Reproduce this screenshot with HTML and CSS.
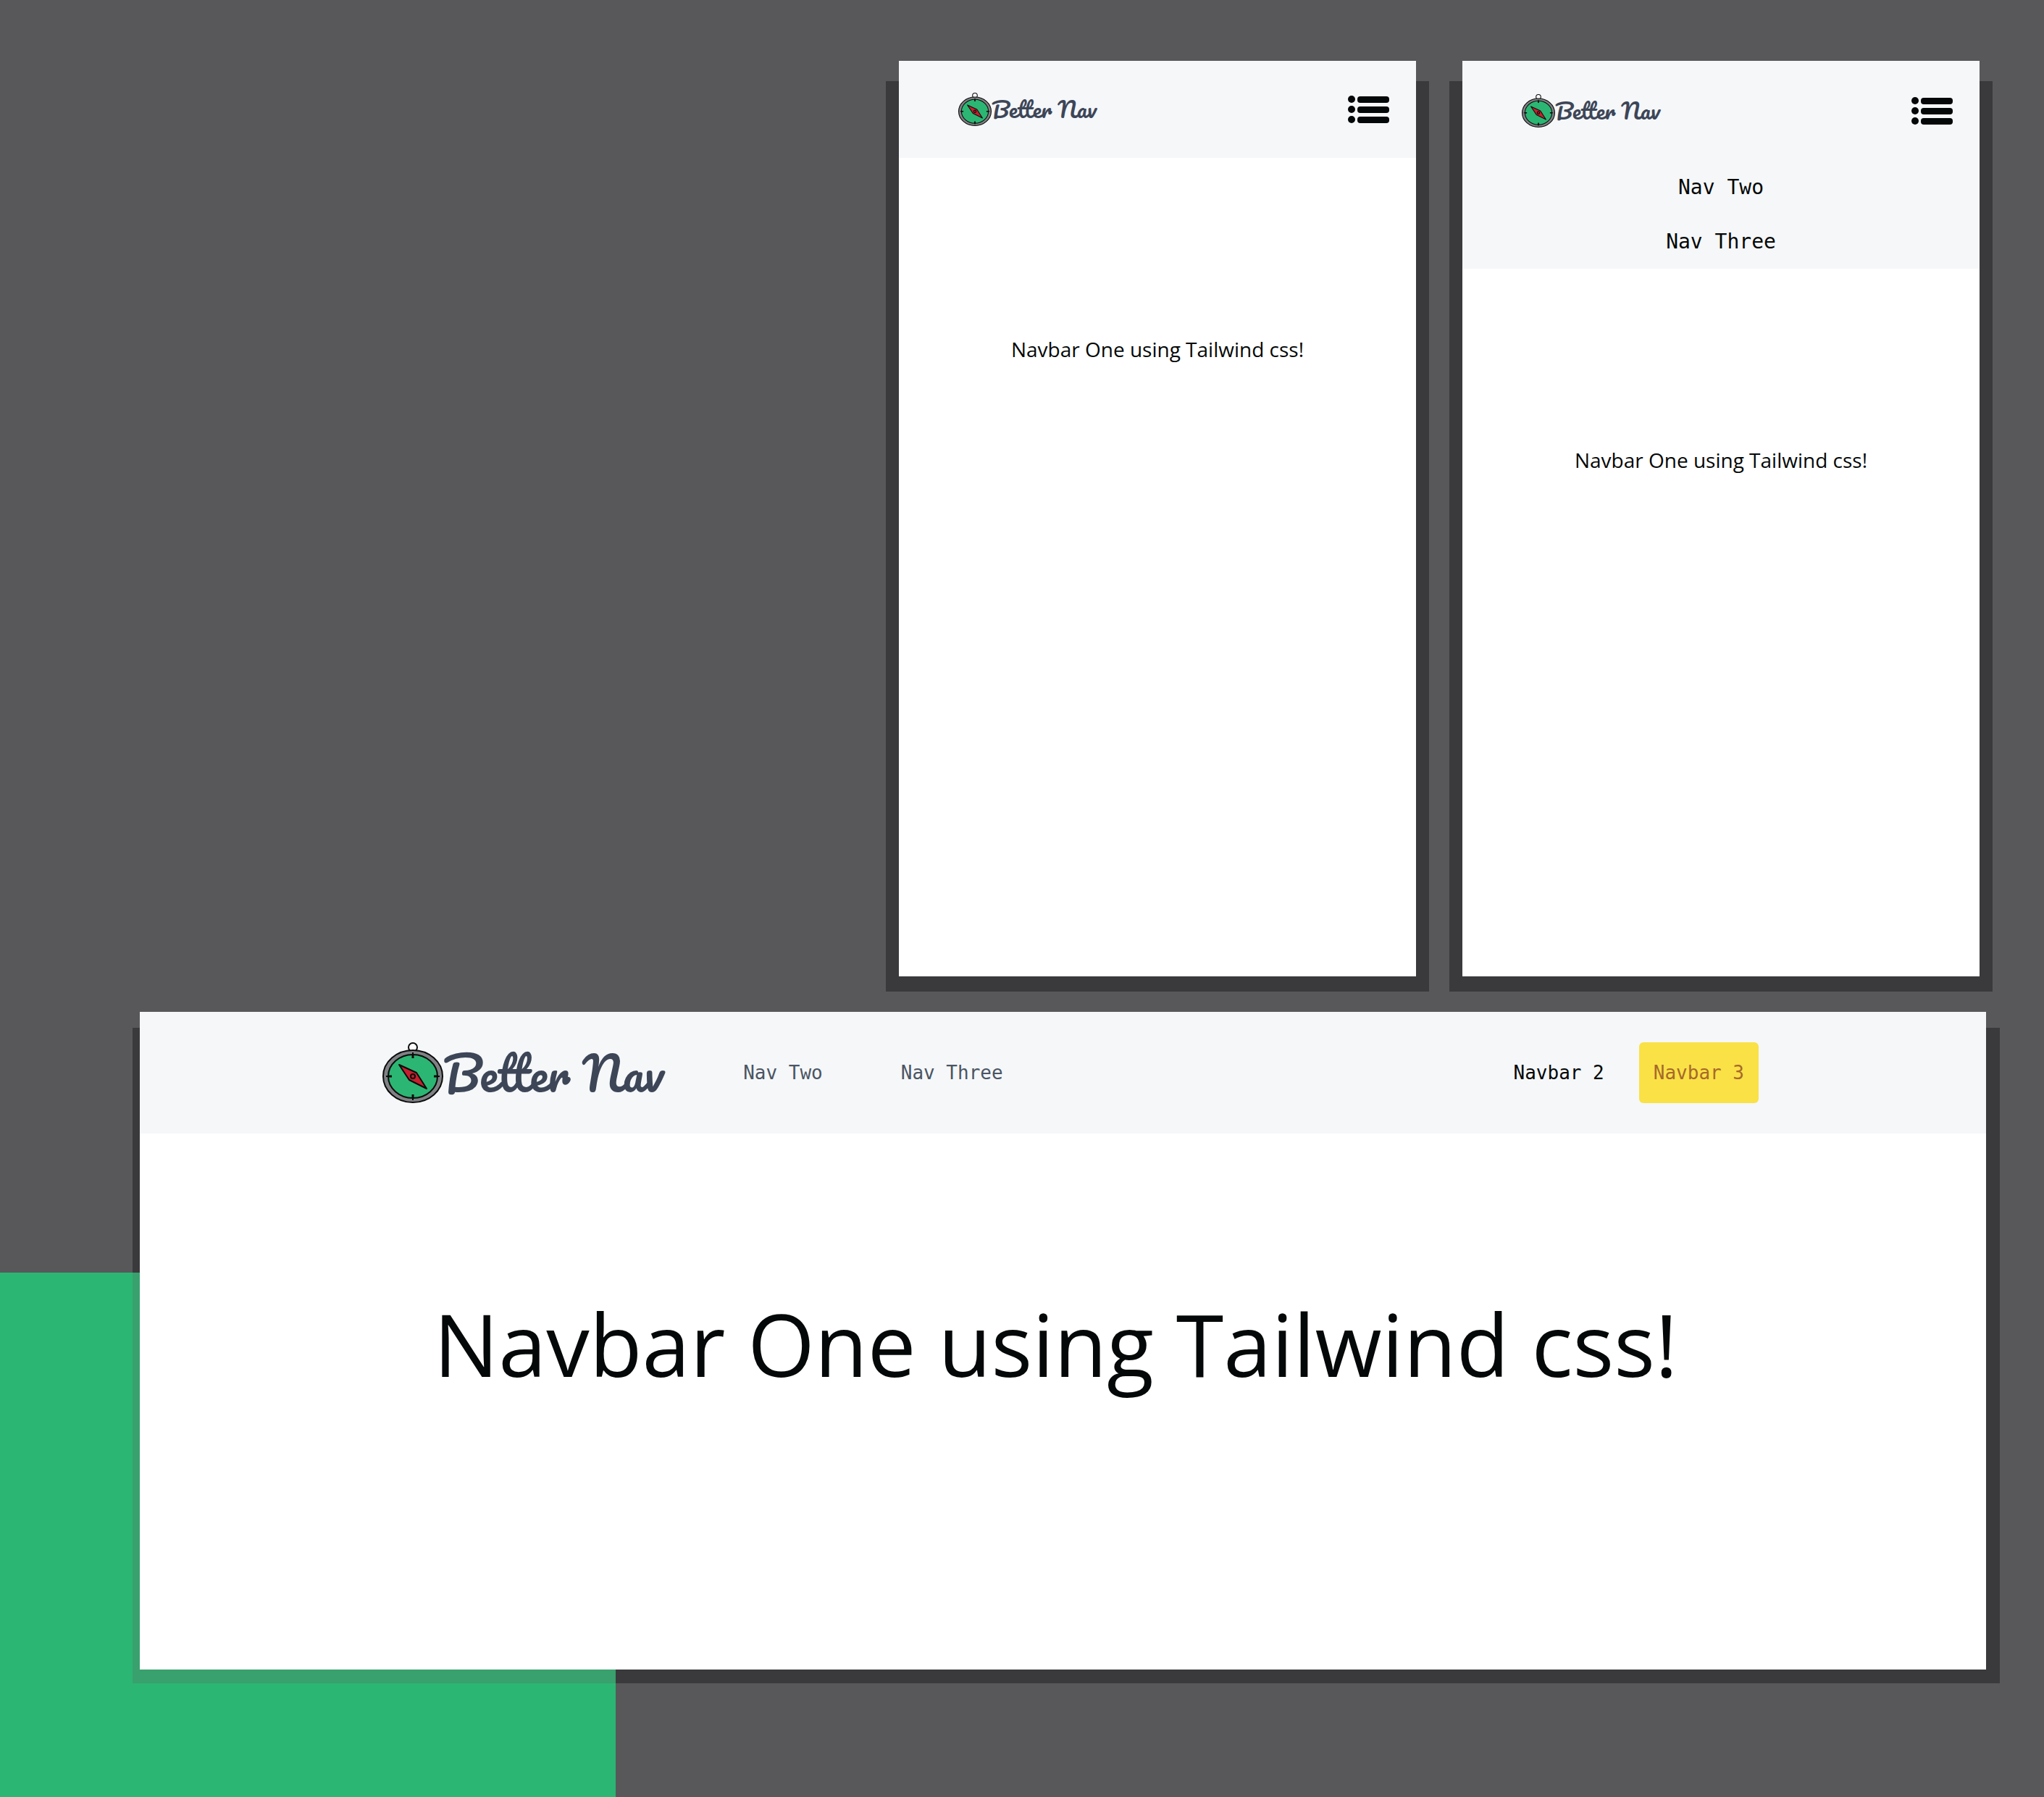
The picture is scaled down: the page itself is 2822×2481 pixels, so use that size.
FILE: index.html
```html
<!DOCTYPE html>
<html lang="en">
<head>
<meta charset="utf-8">
<meta name="viewport" content="width=device-width, initial-scale=1">
<title>Better Nav</title>
<link rel="stylesheet" href="styles.css">
</head>
<body>
<svg class="sprite" aria-hidden="true">
  <symbol id="compass" viewBox="0 0 84 84">
    <circle cx="42" cy="7" r="6" fill="#fff" stroke="#0b0b0b" stroke-width="2"/>
    <ellipse cx="42" cy="47" rx="41" ry="36" fill="#808184" stroke="#0b0b0b" stroke-width="2"/>
    <ellipse cx="42" cy="47" rx="34" ry="30" fill="#2cb673" stroke="#0b0b0b" stroke-width="2"/>
    <path d="M42 14v7M42 73v7M5 47h7M72 47h7" stroke="#0b0b0b" stroke-width="2" fill="none"/>
    <path d="M42 17v5M42 72v5M8 47h5M71 47h5" stroke="#0b0b0b" stroke-width="3" fill="none"/>
    <path d="M23 31L47 42L61 64L37 52Z" fill="#c4202e" stroke="#0b0b0b" stroke-width="2" stroke-linejoin="round"/>
    <circle cx="42" cy="47" r="3" fill="#c4202e" stroke="#0b0b0b" stroke-width="2"/>
  </symbol>
  <symbol id="list" viewBox="0 0 58 40">
    <g fill="#050808">
      <circle cx="5" cy="6" r="5"/><circle cx="5" cy="20" r="5"/><circle cx="5" cy="34" r="5"/>
      <rect x="13" y="2" width="44" height="9" rx="4"/>
      <rect x="13" y="16" width="44" height="9" rx="4"/>
      <rect x="13" y="30" width="44" height="9" rx="4"/>
    </g>
  </symbol>
</svg>
<main class="stage">
  <div class="phones">
    <div class="shell shell-phone">
      <section class="screen">
        <header class="phone-header">
          <div class="phone-bar">
            <a class="brand" href="#"><svg class="brand-icon" aria-hidden="true"><use href="#compass"/></svg><span>Better Nav</span></a>
            <button class="toggle" type="button" aria-label="Open menu"><svg class="toggle-icon" aria-hidden="true"><use href="#list"/></svg></button>
          </div>
        </header>
        <p class="phone-text">Navbar One using Tailwind css!</p>
      </section>
    </div>
    <div class="shell shell-phone">
      <section class="screen">
        <header class="phone-header">
          <div class="phone-bar phone-bar-open">
            <a class="brand" href="#"><svg class="brand-icon" aria-hidden="true"><use href="#compass"/></svg><span>Better Nav</span></a>
            <button class="toggle" type="button" aria-label="Close menu" aria-expanded="true"><svg class="toggle-icon" aria-hidden="true"><use href="#list"/></svg></button>
          </div>
          <nav class="phone-menu">
            <a href="#">Nav Two</a>
            <a href="#">Nav Three</a>
          </nav>
        </header>
        <p class="phone-text">Navbar One using Tailwind css!</p>
      </section>
    </div>
  </div>
  <div class="shell shell-desktop">
    <section class="screen">
      <header class="desktop-bar">
        <a class="brand brand-large" href="#"><svg class="brand-icon" aria-hidden="true"><use href="#compass"/></svg><span>Better Nav</span></a>
        <nav class="desktop-links">
          <a href="#">Nav Two</a>
          <a href="#">Nav Three</a>
        </nav>
        <div class="desktop-actions">
          <a href="#">Navbar 2</a>
          <button class="cta" type="button">Navbar 3</button>
        </div>
      </header>
      <h1 class="headline">Navbar One using Tailwind css!</h1>
    </section>
  </div>
</main>
</body>
</html>
```
FILE: styles.css
```css
* { box-sizing: border-box; }

body {
  margin: 0;
  background: #58585a;
  color: #050808;
  font-family: "Segoe UI", "Open Sans", sans-serif;
}

a { color: inherit; text-decoration: none; }

.sprite { position: absolute; width: 0; height: 0; }

.stage {
  display: flex;
  flex-direction: column;
  gap: 28px;
  min-height: 100vh;
  padding: 84px 61px 157px 183px;
  background: linear-gradient(#2cb673, #2cb673) no-repeat left bottom / 850px 724px;
}

.phones {
  display: flex;
  justify-content: flex-end;
  gap: 28px;
  padding-right: 10px;
}

.shell {
  display: flex;
  background: linear-gradient(#3a3a3c, #3a3a3c) no-repeat 0 28px;
}

.shell-phone {
  flex: 0 1 750px;
  min-height: 1285px;
  padding: 0 18px 21px;
}

/* The shadow turns green where it falls on the corner block. */
.shell-desktop {
  flex: 1;
  padding: 0 19px 19px 10px;
  background:
    linear-gradient(#38a16d, #38a16d) no-repeat left bottom / 667px 567px,
    linear-gradient(#3a3a3c, #3a3a3c) no-repeat 0 22px;
}

.screen { flex: 1; background: #fff; }

.brand {
  display: flex;
  align-items: center;
  color: #3d4657;
  font: 400 30px/1 "Pacifico", "Lato", cursive;
}

.brand-icon { width: 46px; height: 46px; }

.brand-large { font-size: 63px; }
.brand-large .brand-icon { width: 84px; height: 84px; }

.phone-header { background: #f5f7f9; }

.phone-bar {
  display: flex;
  align-items: center;
  justify-content: space-between;
  height: 134px;
  padding: 0 36px 0 82px;
}

.phone-bar-open { height: 137px; }

.toggle { padding: 0; border: 0; background: none; cursor: pointer; }
.toggle-icon { display: block; width: 58px; height: 40px; }

.phone-menu {
  display: flex;
  flex-direction: column;
  text-align: center;
  font: 28px/75px "Consolas", "DejaVu Sans Mono", monospace;
}

.phone-text {
  margin: 244px 0 0;
  text-align: center;
  font-size: 28px;
  line-height: 40px;
}

.desktop-bar {
  display: flex;
  align-items: center;
  height: 168px;
  padding: 0 314px 0 335px;
  background: #f5f7f9;
  font: 26px/32px "Consolas", "DejaVu Sans Mono", monospace;
}

.desktop-links {
  display: flex;
  gap: 108px;
  margin-left: 110px;
  color: #4b5563;
}

.desktop-actions {
  display: flex;
  align-items: center;
  gap: 48px;
  margin-left: auto;
}

.cta {
  height: 84px;
  padding: 0 20px;
  border: 0;
  border-radius: 6px;
  background: #fae146;
  color: #a6692b;
  font: inherit;
  cursor: pointer;
}

.headline {
  margin: 200px 20px 0 0;
  text-align: center;
  font-size: 119px;
  font-weight: 400;
  line-height: 180px;
}
```
